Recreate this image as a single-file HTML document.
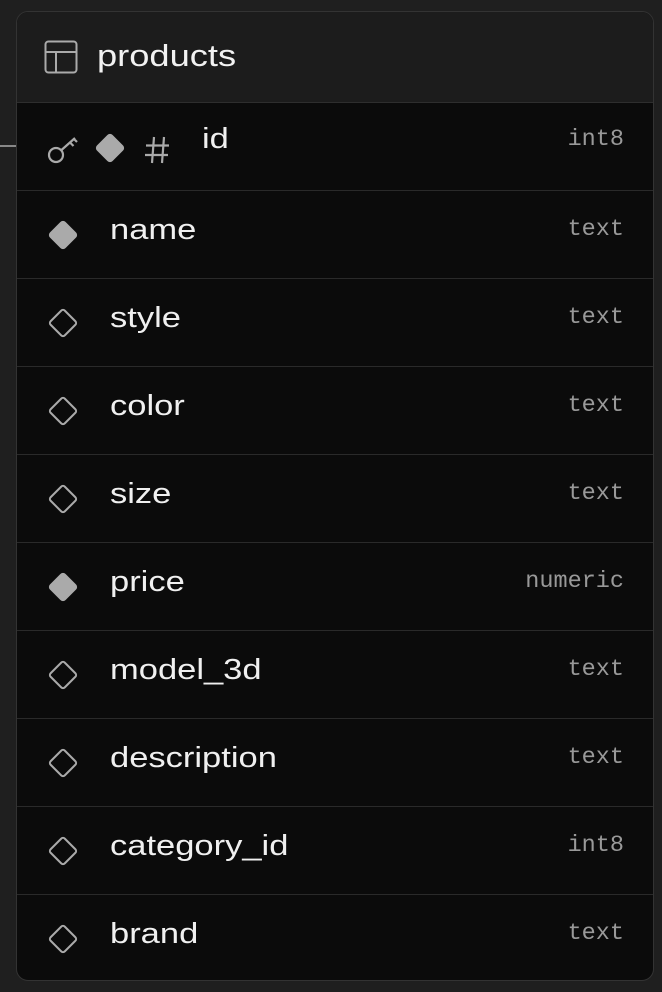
<!DOCTYPE html>
<html><head><style>
body{margin:0;width:662px;height:992px;background:#1f1f1f;position:relative;overflow:hidden;font-family:"Liberation Sans",sans-serif}
.card{position:absolute;left:16px;top:11px;width:636px;height:968px;border:1px solid #333;border-radius:12px;overflow:hidden;background:#0b0b0b}
.hd{height:90px;background:#1c1c1c;border-bottom:1px solid #2e2e2e;position:relative}
.hd span{position:absolute;left:80px;top:26px;font-size:31px;color:#f2f2f2;transform:scaleX(1.17);transform-origin:left}
.row{height:87px;border-bottom:1px solid #2a2a2a;position:relative}
.row:last-child{border-bottom:none}
.n{position:absolute;left:93px;top:23px;font-size:29px;color:#f0f0f0;transform:scaleX(1.19);transform-origin:left}
.t{position:absolute;right:29px;top:25px;font-family:"Liberation Mono",monospace;font-size:23.5px;color:#999}
svg{position:absolute}
</style></head><body>
<div style="position:absolute;left:0;top:145px;width:16px;height:2px;background:#888"></div>
<div class="card">
<div class="hd"><svg style="left:27px;top:28px" width="34" height="34" viewBox="0 0 34 34"><rect x="1.5" y="1.5" width="31" height="31" rx="3" fill="none" stroke="#aaa" stroke-width="2"/><path d="M1.5 12H32.5M12 12V32.5" stroke="#aaa" stroke-width="2"/></svg><span>products</span></div>
<div class="row"><svg style="left:30px;top:29px" width="34" height="34" viewBox="0 0 34 34"><circle cx="9" cy="23" r="7" fill="none" stroke="#aaa" stroke-width="2.2"/><path d="M14.5 18L28 6M23 10.5l3.5 3.5M27 7l3 3" stroke="#aaa" stroke-width="2.2" fill="none"/></svg><svg style="left:76px;top:28px" width="34" height="34" viewBox="0 0 34 34"><rect x="6" y="6" width="22" height="22" rx="3.5" transform="rotate(45 17 17)" fill="#aaa"/></svg><svg style="left:126px;top:32px" width="28" height="30" viewBox="0 0 28 30"><path d="M11 2L9 28M21 2L19 28M3 10.5H26M2 20H25" stroke="#aaa" stroke-width="2.2"/></svg><span class="n" style="left:185px;top:20px">id</span><span class="t" style="top:23px">int8</span></div>
<div class="row"><svg style="left:29px;top:27px" width="34" height="34" viewBox="0 0 34 34"><rect x="6" y="6" width="22" height="22" rx="3.5" transform="rotate(45 17 17)" fill="#aaa"/></svg><span class="n">name</span><span class="t">text</span></div>
<div class="row"><svg style="left:29px;top:27px" width="34" height="34" viewBox="0 0 34 34"><rect x="7" y="7" width="20" height="20" rx="2.5" transform="rotate(45 17 17)" fill="none" stroke="#aaa" stroke-width="2"/></svg><span class="n">style</span><span class="t">text</span></div>
<div class="row"><svg style="left:29px;top:27px" width="34" height="34" viewBox="0 0 34 34"><rect x="7" y="7" width="20" height="20" rx="2.5" transform="rotate(45 17 17)" fill="none" stroke="#aaa" stroke-width="2"/></svg><span class="n">color</span><span class="t">text</span></div>
<div class="row"><svg style="left:29px;top:27px" width="34" height="34" viewBox="0 0 34 34"><rect x="7" y="7" width="20" height="20" rx="2.5" transform="rotate(45 17 17)" fill="none" stroke="#aaa" stroke-width="2"/></svg><span class="n">size</span><span class="t">text</span></div>
<div class="row"><svg style="left:29px;top:27px" width="34" height="34" viewBox="0 0 34 34"><rect x="6" y="6" width="22" height="22" rx="3.5" transform="rotate(45 17 17)" fill="#aaa"/></svg><span class="n">price</span><span class="t">numeric</span></div>
<div class="row"><svg style="left:29px;top:27px" width="34" height="34" viewBox="0 0 34 34"><rect x="7" y="7" width="20" height="20" rx="2.5" transform="rotate(45 17 17)" fill="none" stroke="#aaa" stroke-width="2"/></svg><span class="n">model_3d</span><span class="t">text</span></div>
<div class="row"><svg style="left:29px;top:27px" width="34" height="34" viewBox="0 0 34 34"><rect x="7" y="7" width="20" height="20" rx="2.5" transform="rotate(45 17 17)" fill="none" stroke="#aaa" stroke-width="2"/></svg><span class="n">description</span><span class="t">text</span></div>
<div class="row"><svg style="left:29px;top:27px" width="34" height="34" viewBox="0 0 34 34"><rect x="7" y="7" width="20" height="20" rx="2.5" transform="rotate(45 17 17)" fill="none" stroke="#aaa" stroke-width="2"/></svg><span class="n">category_id</span><span class="t">int8</span></div>
<div class="row"><svg style="left:29px;top:27px" width="34" height="34" viewBox="0 0 34 34"><rect x="7" y="7" width="20" height="20" rx="2.5" transform="rotate(45 17 17)" fill="none" stroke="#aaa" stroke-width="2"/></svg><span class="n">brand</span><span class="t">text</span></div>
</div>
</body></html>
